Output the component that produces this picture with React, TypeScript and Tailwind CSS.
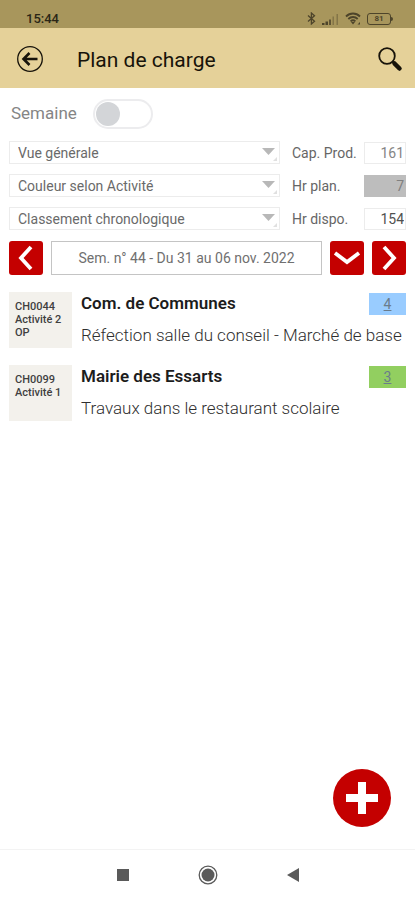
import { useState } from 'react';
import type { ReactNode } from 'react';
import { clsx } from 'clsx';

const VIEWS = ['Vue générale', 'Vue détaillée'];
const COLORS = ['Couleur selon Activité', 'Couleur selon Statut'];
const SORTS = ['Classement chronologique', 'Classement alphabétique'];

const JOBS = [
  {
    code: 'CH0044',
    lines: ['Activité 2', 'OP'],
    client: 'Com. de Communes',
    label: 'Réfection salle du conseil - Marché de base',
    hours: 4,
    color: 'bg-[#99ccff]',
  },
  {
    code: 'CH0099',
    lines: ['Activité 1'],
    client: 'Mairie des Essarts',
    label: 'Travaux dans le restaurant scolaire',
    hours: 3,
    color: 'bg-[#92cf60]',
  },
];

// ─── Status bar ───────────────────────────────────────────
function StatusBar() {
  return (
    <div className="flex h-7 items-end justify-between bg-[#a8965c] pr-[22px] pl-[26px] text-[#4d442a]">
      <span className="text-[13px] leading-[18px] font-medium text-[#2b2616]">15:44</span>
      <div className="flex items-center gap-1.5 pb-[3px]">
        <svg width="9" height="13" viewBox="0 0 9 13" fill="none" stroke="currentColor" strokeWidth="1.3">
          <path d="M1 3.500 7.500 9.300 4.400 12V1l3.100 2.700L1 9.500" />
        </svg>
        <svg width="17" height="12" viewBox="0 0 17 12" fill="currentColor">
          <path d="M0 10h2.500v2H0zM3.500 8.500H6V12H3.500z" />
          <path d="M7 6.500h2V12H7z" opacity=".8" />
          <path d="M10.500 3.500H12V12h-1.500zM14.500 1H16v11h-1.500z" opacity=".4" />
        </svg>
        <svg width="16" height="13" viewBox="0 0 16 13" fill="none" stroke="currentColor" strokeWidth="1.800">
          <path d="M1 4.500C5 .5 11 .5 15 4.500M3.300 7C6 4.300 10 4.300 12.700 7M5.600 9.300c1.400-1.300 3.400-1.300 4.800 0" />
          <path d="m6 10 2 2.400 2-2.400zM12.500 12.500l2.500-2.500v2.500z" fill="currentColor" stroke="none" />
        </svg>
        <div className="flex items-center">
          <span className="flex h-3 w-6 items-center justify-center rounded-[3px] border border-current text-[8px] leading-none font-bold">
            81
          </span>
          <span className="h-1 w-0.5 rounded-r-sm bg-current" />
        </div>
      </div>
    </div>
  );
}

// ─── Select with its figure on the right ──────────────────
function FilterRow({
  id,
  name,
  options,
  label,
  value,
  tone,
}: {
  id: string;
  name: string;
  options: string[];
  label: string;
  value: number;
  tone: string;
}) {
  const [selected, setSelected] = useState(options[0]);
  return (
    <div className="flex items-center">
      <div className="relative min-w-0 flex-1">
        <select
          aria-label={name}
          value={selected}
          onChange={(e) => setSelected(e.target.value)}
          className="block h-[23px] w-full appearance-none border border-[#ececec] bg-white pr-6 pl-2 text-[14px] leading-5 text-[#6a6a6a]"
        >
          {options.map((o) => (
            <option key={o}>{o}</option>
          ))}
        </select>
        <svg
          className="pointer-events-none absolute top-1.5 right-0"
          width="18"
          height="16"
          viewBox="0 0 18 16"
          fill="#b8b8b8"
        >
          <path d="M0 1h13L6.500 8z" />
          <path d="M15 10v4h-4z" fill="#e0e0e0" />
        </svg>
      </div>
      <label htmlFor={id} className="w-[84px] pl-3 text-[14px] leading-5 text-[#666]">
        {label}
      </label>
      <input
        id={id}
        readOnly
        value={value}
        className={clsx('h-[22px] w-[42px] border pr-px text-right text-[14px]', tone)}
      />
    </div>
  );
}

function RedButton({ label, path }: { label: string; path: string }) {
  return (
    <button
      type="button"
      aria-label={label}
      className="flex size-[34px] shrink-0 items-center justify-center rounded-[3px] bg-[#c40000]"
    >
      <svg width="34" height="34" viewBox="0 0 34 34" fill="none" stroke="#fff" strokeWidth="3.800">
        <path d={path} />
      </svg>
    </button>
  );
}

function NavButton({ label, children }: { label: string; children: ReactNode }) {
  return (
    <button type="button" aria-label={label} className="flex size-6 items-center justify-center">
      {children}
    </button>
  );
}

export default function App() {
  const [week, setWeek] = useState(false);

  return (
    <div className="flex min-h-screen flex-col bg-white font-[Roboto,sans-serif]">
      <StatusBar />

      <header className="flex h-[60px] items-center bg-[#e5d199] pt-1 pr-3 pl-4 text-[#17130a]">
        <button type="button" aria-label="Retour" className="mb-1">
          <svg width="28" height="28" viewBox="0 0 28 28" fill="none" stroke="currentColor">
            <circle cx="14" cy="15" r="12.300" strokeWidth="1.300" />
            <path d="M21.500 15H8M13.500 9 7.500 15l6 6" strokeWidth="2.600" />
          </svg>
        </button>
        <h1 className="flex-1 pl-[33px] text-[21px] leading-7">Plan de charge</h1>
        <button type="button" aria-label="Rechercher">
          <svg width="26" height="26" viewBox="0 0 26 26" fill="none" stroke="currentColor">
            <circle cx="10" cy="9" r="7.800" strokeWidth="1.800" />
            <path d="m15.500 14.500 3 3" strokeWidth="2" />
            <path d="m17.500 16.500 5 5" strokeWidth="4.500" strokeLinecap="round" />
          </svg>
        </button>
      </header>

      <main className="flex-1 px-[9px] pt-[11px]">
        <label className="flex w-fit items-center gap-4 pl-0.5 text-[17px] text-[#858585]">
          Semaine
          <input
            type="checkbox"
            role="switch"
            checked={week}
            onChange={(e) => setWeek(e.target.checked)}
            className="peer sr-only"
          />
          <span className="flex h-[30px] w-[60px] items-center rounded-full border-2 border-[#ececee] px-px peer-checked:justify-end">
            <span className="size-6 rounded-full bg-[#d3d5d8]" />
          </span>
        </label>

        <div className="mt-3 flex flex-col gap-[10px]">
          <FilterRow
            id="cap"
            name="Vue"
            options={VIEWS}
            label="Cap. Prod."
            value={161}
            tone="border-[#ececec] bg-white text-[#858585]"
          />
          <FilterRow
            id="plan"
            name="Couleur"
            options={COLORS}
            label="Hr plan."
            value={7}
            tone="border-[#bdbdbd] bg-[#bdbdbd] text-[#808080]"
          />
          <FilterRow
            id="dispo"
            name="Classement"
            options={SORTS}
            label="Hr dispo."
            value={154}
            tone="border-[#ececec] bg-white text-[#505050]"
          />
        </div>

        <div className="mt-[11px] flex gap-2">
          <RedButton label="Semaine précédente" path="M22 6 12 17l10 11" />
          <input
            aria-label="Semaine affichée"
            readOnly
            value="Sem. n° 44 - Du 31 au 06 nov. 2022"
            className="h-[34px] min-w-0 flex-1 border border-[#c4c4c4] text-center text-[14px] text-[#707070]"
          />
          <RedButton label="Choisir la semaine" path="m5 12 12 9 12-9" />
          <RedButton label="Semaine suivante" path="m12 6 10 11-10 11" />
        </div>

        <ul className="mt-[17px] flex flex-col gap-[17px]">
          {JOBS.map((job) => (
            <li key={job.code} className="flex gap-[9px]">
              <div className="h-14 w-[63px] shrink-0 bg-[#f3f1ec] pt-2 pl-1.5 text-[11px] leading-[13px] font-medium text-[#3f3f3f]">
                <p>{job.code}</p>
                {job.lines.map((line) => (
                  <p key={line}>{line}</p>
                ))}
              </div>
              <div className="min-w-0 flex-1">
                <div className="flex items-start justify-between">
                  <h2 className="text-[17px] leading-[22px] font-semibold text-[#1c1c1c]">{job.client}</h2>
                  <a
                    href="#"
                    className={clsx(
                      'mt-px flex h-[22px] w-[37px] items-center justify-center text-[14px] text-[#6a7c8c] underline',
                      job.color,
                    )}
                  >
                    {job.hours}
                  </a>
                </div>
                <p className="mt-2 text-[17px] leading-[24px] font-light whitespace-nowrap text-[#2f2f2f]">
                  {job.label}
                </p>
              </div>
            </li>
          ))}
        </ul>
      </main>

      <button
        type="button"
        aria-label="Ajouter"
        className="fixed right-6 bottom-[73px] flex size-[58px] items-center justify-center rounded-full bg-[#c40000]"
      >
        <svg width="32" height="32" viewBox="0 0 32 32" fill="#fff">
          <path d="M12 0h8v12h12v8H20v12h-8V20H0v-8h12z" />
        </svg>
      </button>

      <nav className="flex h-[51px] items-center justify-center gap-[61px] border-t border-[#f3f3f3] bg-white text-[#5a5a5a]">
        <NavButton label="Applications récentes">
          <svg width="12" height="12" viewBox="0 0 12 12" fill="currentColor">
            <path d="M0 0h12v12H0z" />
          </svg>
        </NavButton>
        <NavButton label="Accueil">
          <svg width="20" height="20" viewBox="0 0 20 20" fill="none" stroke="currentColor">
            <circle cx="10" cy="10" r="8.800" strokeWidth="1.300" />
            <circle cx="10" cy="10" r="6.500" fill="currentColor" stroke="none" />
          </svg>
        </NavButton>
        <NavButton label="Précédent">
          <svg width="12" height="14" viewBox="0 0 12 14" fill="currentColor">
            <path d="M12 0v14L0 7z" />
          </svg>
        </NavButton>
      </nav>
    </div>
  );
}
